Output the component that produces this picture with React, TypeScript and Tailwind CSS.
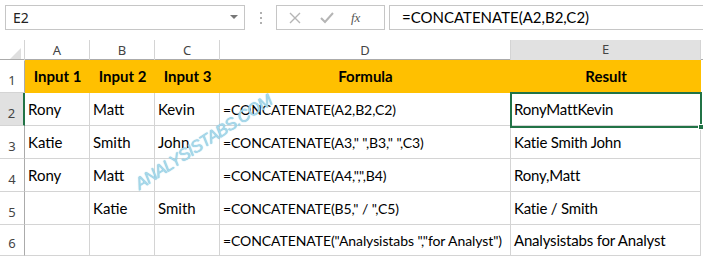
import React from "react";

interface Row {
  num: number
  cells: string[]
}

const cols = ["A", "B", "C", "D", "E"];

const rows: Row[] = [
  { num: 2, cells: ["Rony", "Matt", "Kevin", "=CONCATENATE(A2,B2,C2)", "RonyMattKevin"] },
  { num: 3, cells: ["Katie", "Smith", "John", "=CONCATENATE(A3,\" \",B3,\" \",C3)", "Katie Smith John"] },
  { num: 4, cells: ["Rony", "Matt", "", "=CONCATENATE(A4,\",\",B4)", "Rony,Matt"] },
  { num: 5, cells: ["", "Katie", "Smith", "=CONCATENATE(B5,\" / \",C5)", "Katie / Smith"] },
  { num: 6, cells: ["", "", "", "=CONCATENATE(\"Analysistabs \",\"for Analyst\")", "Analysistabs for Analyst"] },
];

const gridCols = "grid grid-cols-[25px_65px_65px_65px_291px_190px_1fr]";

const FormulaBar: React.FC = () => {
  return (
    <div className="flex items-start h-[40px] pt-[5px] bg-white font-['Noto_Sans',sans-serif]">
      <div className="ml-[5px] w-[240px] h-[25px] border border-[#c6c6c6] flex items-center justify-between pl-[7px] pr-[6px] text-[14px] text-[#222]">
        <span>E2</span>
        <svg width="8" height="5" viewBox="0 0 8 5"><path d="M0 0 L8 0 L4 4 Z" fill="#777" /></svg>
      </div>
      <div className="w-[31px] h-[25px] flex flex-col items-center justify-center gap-[3px]">
        <span className="w-[2px] h-[2px] bg-[#b0b0b0]" />
        <span className="w-[2px] h-[2px] bg-[#b0b0b0]" />
        <span className="w-[2px] h-[2px] bg-[#b0b0b0]" />
      </div>
      <div className="w-[109px] h-[25px] border border-[#c6c6c6] flex items-center pl-[12px]">
        <svg width="12" height="12" viewBox="0 0 12 12"><path d="M1 1 L11 11 M11 1 L1 11" stroke="#b5b5b5" strokeWidth="1.4" /></svg>
        <svg className="ml-[19px]" width="14" height="12" viewBox="0 0 14 12"><path d="M1 6 L5 10 L13 1" stroke="#b5b5b5" strokeWidth="2" fill="none" /></svg>
        <span className="ml-[17px] text-[13px] italic text-[#555] font-['Liberation_Serif',serif]">fx</span>
      </div>
      <div className="ml-[4px] flex-1 h-[25px] border border-r-0 border-[#c6c6c6] flex items-center pl-[12px] text-[15px] text-black font-['Lato',sans-serif]">
        =CONCATENATE(A2,B2,C2)
      </div>
    </div>
  );
};

const Sheet: React.FC = () => {
  return (
    <div className="relative font-['Lato',sans-serif] text-[15px] text-black">
      {/* column header row */}
      <div className={`${gridCols} h-[20px] border-b border-[#ababab] font-['Noto_Sans',sans-serif] text-[13px] text-[#444]`}>
        <div className="relative border-r border-[#d4d4d4]">
          <svg className="absolute right-[3px] bottom-[2px]" width="11" height="11" viewBox="0 0 11 11"><path d="M11 0 L11 11 L0 11 Z" fill="#dfdfdf" /></svg>
        </div>
        {cols.map((c) => (
          <div
            key={c}
            className={
              c === "E"
                ? "flex items-center justify-center bg-[#e1e1e1] border-r border-[#d4d4d4] border-b-2 border-b-[#217346] -mb-[1px]"
                : "flex items-center justify-center border-r border-[#d4d4d4]"
            }
          >
            {c}
          </div>
        ))}
        <div />
      </div>

      {/* row 1 header */}
      <div className={`${gridCols} h-[33px]`}>
        <div className="flex items-end justify-center pb-[2px] border-r border-[#ababab] border-b border-b-[#d4d4d4] font-['Noto_Sans',sans-serif] text-[13px] text-[#444]">1</div>
        <div className="flex items-center justify-center bg-[#ffc000] font-bold">Input 1</div>
        <div className="flex items-center justify-center bg-[#ffc000] font-bold">Input 2</div>
        <div className="flex items-center justify-center bg-[#ffc000] font-bold">Input 3</div>
        <div className="flex items-center justify-center bg-[#ffc000] font-bold">Formula</div>
        <div className="flex items-center justify-center bg-[#ffc000] font-bold">Result</div>
        <div />
      </div>

      {rows.map((r) => (
        <div key={r.num} className={`${gridCols} ${r.num === 6 ? "h-[31px]" : "h-[33px]"}`}>
          <div
            className={
              r.num === 2
                ? "flex items-end justify-center pb-[2px] bg-[#e1e1e1] border-r-2 border-[#217346] border-b border-b-[#d4d4d4] font-['Noto_Sans',sans-serif] text-[13px] text-[#444]"
                : "flex items-end justify-center pb-[2px] border-r border-[#ababab] border-b border-b-[#d4d4d4] font-['Noto_Sans',sans-serif] text-[13px] text-[#444]"
            }
          >
            {r.num}
          </div>
          {r.cells.map((v, i) => (
            <div
              key={i}
              className={
                i === 3
                  ? "flex items-center pl-[3px] border-r border-b border-[#d4d4d4] whitespace-nowrap overflow-hidden text-[14px] tracking-[-0.08px]"
                  : i === 4
                  ? "flex items-center pl-[3px] border-r border-b border-[#d4d4d4] whitespace-nowrap overflow-hidden tracking-[-0.2px]"
                  : "flex items-center pl-[3px] border-r border-b border-[#d4d4d4] whitespace-nowrap overflow-hidden"
              }
            >
              {v}
            </div>
          ))}
          <div />
        </div>
      ))}

      {/* active cell E2 */}
      <div className="absolute left-[510px] top-[52px] w-[192px] h-[36px] border-2 border-[#217346]">
        <div className="absolute -right-[4px] -bottom-[4px] w-[6px] h-[6px] bg-[#217346] border border-white" />
      </div>

      {/* watermark */}
      <div className="absolute left-[137px] top-[136px] -rotate-[33deg] origin-left italic text-[17px] leading-[20px] tracking-[-0.6px] text-[#a8d8ea] font-['Liberation_Sans',sans-serif] [text-shadow:0_0_1px_#5fb3d3]">
        ANALYSISTABS.COM
      </div>
    </div>
  );
};

const App: React.FC = () => {
  return (
    <div className="w-[703px] h-[256px] bg-white overflow-hidden">
      <FormulaBar />
      <Sheet />
    </div>
  );
};

export default App;
